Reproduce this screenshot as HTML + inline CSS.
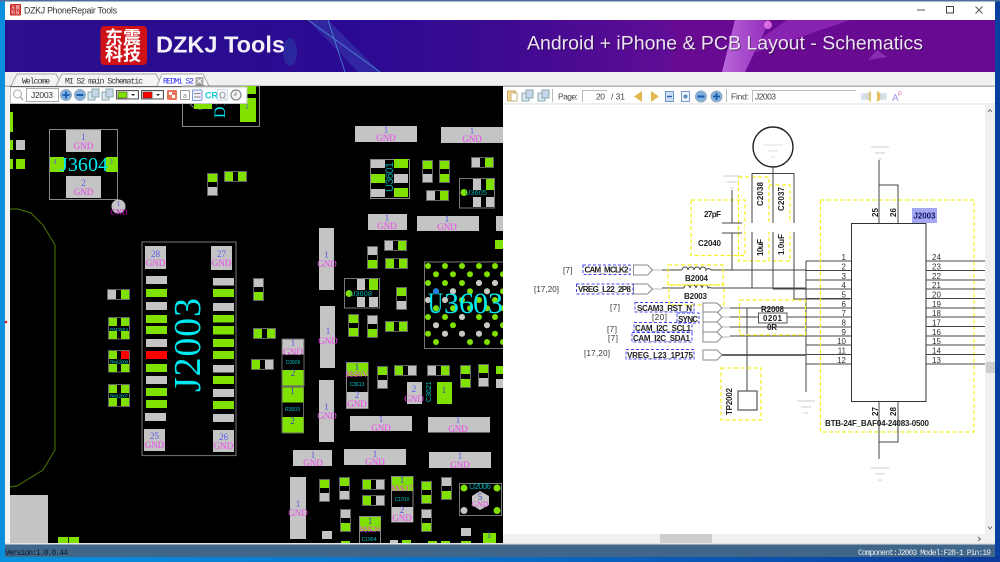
<!DOCTYPE html>
<html><head><meta charset="utf-8"><title>DZKJ PhoneRepair Tools</title>
<style>
html,body{margin:0;padding:0;background:#0a8fdc;width:1000px;height:562px;overflow:hidden}
svg{display:block;position:absolute;left:0;top:0;filter:blur(.35px)}
text{font-family:"Liberation Sans","Noto Sans CJK SC",sans-serif}
.s{font-family:"Liberation Serif",serif}
.n{font-family:"Liberation Serif",serif;font-size:9px;fill:#5a5af0;text-anchor:middle}
.g{font-family:"Liberation Serif",serif;font-size:9px;fill:#ee44ee;text-anchor:middle}
.c{font-family:"Liberation Serif",serif;fill:#00e8f0}
.t{font-family:"Liberation Sans",sans-serif;fill:#00a8a8;font-size:8px}
.m{font-family:"Liberation Mono",monospace;font-size:8px;fill:#333}
.k{font-size:8px;fill:#222;font-weight:bold}
.l{font-size:8px;fill:#333;text-anchor:end}
.r{font-size:8px;fill:#333}
.b{fill:none;stroke:#4444ee;stroke-width:1;stroke-dasharray:3 2}
.y{fill:none;stroke:#f5f020;stroke-width:1.2;stroke-dasharray:4 2.5}
.w{stroke:#444;stroke-width:1;fill:none}
.p{fill:#fff;stroke:#888;stroke-width:1}
.gl{stroke:#ccc;stroke-width:1;fill:none}
.tb{font-size:8.5px;fill:#444}
</style></head><body>
<svg width="1000" height="562" viewBox="0 0 1000 562" xmlns="http://www.w3.org/2000/svg">
<defs>
<linearGradient id="bn" x1="0" x2="1" y1="0" y2="0"><stop offset="0" stop-color="#2b0f8c"/><stop offset=".35" stop-color="#2a0a92"/><stop offset=".5" stop-color="#3c0a90"/><stop offset=".67" stop-color="#600c96"/><stop offset=".68" stop-color="#690a92"/><stop offset="1" stop-color="#690a92"/></linearGradient>
<linearGradient id="bt" x1="0" x2="1" y1="0" y2="0"><stop offset="0" stop-color="#0a92de"/><stop offset=".5" stop-color="#0a6cc4"/><stop offset="1" stop-color="#0a3a9c"/></linearGradient>
<linearGradient id="st" x1="0" x2="1" y1="0" y2="0"><stop offset="0" stop-color="#c878e8"/><stop offset="1" stop-color="#9a30c0"/></linearGradient>
<g id="hGW"><rect x=".5" y=".5" width="22" height="10" fill="#000" stroke="#666"/><rect x="1" y="1" width="8" height="9" fill="#80e000"/><rect x="14" y="1" width="8" height="9" fill="#c2c2c2"/></g>
<g id="hWG"><rect x=".5" y=".5" width="22" height="10" fill="#000" stroke="#666"/><rect x="1" y="1" width="8" height="9" fill="#c2c2c2"/><rect x="14" y="1" width="8" height="9" fill="#80e000"/></g>
<g id="hGG"><rect x=".5" y=".5" width="22" height="10" fill="#000" stroke="#666"/><rect x="1" y="1" width="8" height="9" fill="#80e000"/><rect x="14" y="1" width="8" height="9" fill="#80e000"/></g>
<g id="vGW"><rect x=".5" y=".5" width="10" height="22" fill="#000" stroke="#666"/><rect x="1" y="1" width="9" height="8" fill="#80e000"/><rect x="1" y="14" width="9" height="8" fill="#c2c2c2"/></g>
<g id="vWG"><rect x=".5" y=".5" width="10" height="22" fill="#000" stroke="#666"/><rect x="1" y="1" width="9" height="8" fill="#c2c2c2"/><rect x="1" y="14" width="9" height="8" fill="#80e000"/></g>
<g id="vGG"><rect x=".5" y=".5" width="10" height="22" fill="#000" stroke="#666"/><rect x="1" y="1" width="9" height="8" fill="#80e000"/><rect x="1" y="14" width="9" height="8" fill="#80e000"/></g>
<g id="rowA" fill="#80e000"><circle cx="428" cy="0" r="3"/><circle cx="445" cy="0" r="3"/><circle cx="462" cy="0" r="3"/><circle cx="479" cy="0" r="3"/><circle cx="495" cy="0" r="3"/></g>
<g id="rowB" fill="#80e000"><circle cx="436" cy="0" r="3"/><circle cx="453" cy="0" r="3"/><circle cx="470" cy="0" r="3"/><circle cx="487" cy="0" r="3"/><circle cx="503" cy="0" r="3"/></g>
<g id="gnd"><path class="gl" d="M-9 0H9M-5 6H5M-2 12H2"/></g>
<path id="port" d="M0 0H14L19 5L14 10H0Z"/>
<g id="pm"><circle r="5.500" fill="#7fb0de" stroke="#9ab"/><rect x="-3.500" y="-1" width="7" height="2" fill="#1a5ab0"/></g>
<g id="pp"><circle r="5.500" fill="#7fb0de" stroke="#9ab"/><path d="M-3.500 0H3.500M0 -3.500V3.500" stroke="#1a5ab0" stroke-width="1.800"/></g>
<g id="cp"><rect x="-5" y="-3" width="7" height="8" fill="#dde6f0" stroke="#8aa"/><rect x="-1" y="-6" width="7" height="8" fill="#c7d6e8" stroke="#8aa"/></g>
</defs>

<!-- frame -->
<rect width="1000" height="562" fill="#0a8fdc"/>
<rect x="995" width="5" height="562" fill="#0a3fa2"/>
<rect y="0" width="1000" height="1.500" fill="#4c6f96"/>
<rect y="556" width="1000" height="6" fill="url(#bt)"/>
<rect x="5" y="1.500" width="990" height="19" fill="#fff"/>

<!-- title -->
<rect x="10" y="4" width="11" height="11.500" rx="1" fill="#cc2222"/>
<text x="15.500" y="9" font-size="4.500" fill="#fff" text-anchor="middle">东震</text>
<text x="15.500" y="14" font-size="4.500" fill="#fff" text-anchor="middle">科技</text>
<text x="24" y="13.500" font-size="8.800" fill="#333" textLength="93">DZKJ PhoneRepair Tools</text>
<path d="M917 10H925" stroke="#555" stroke-width="1"/>
<rect x="946.500" y="6.500" width="7" height="6.500" fill="none" stroke="#444"/>
<path d="M975.500 6.500L982.500 13.500M982.500 6.500L975.500 13.500" stroke="#555" stroke-width="1"/>

<!-- banner -->
<rect x="5" y="20" width="990" height="52" fill="url(#bn)"/>
<polygon points="308,20 328,20 380,72 358,72" fill="#3f5ac0" opacity=".35"/>
<path d="M308 20L380 72M328 20L345 72" stroke="#5cc6ee" stroke-width="1" opacity=".55" fill="none"/>
<ellipse cx="290" cy="52" rx="7" ry="14" fill="#2f6ec0" opacity=".3"/>
<polygon points="787,20 850,20 757,52 745,50" fill="#9028b8" opacity=".8"/>
<polygon points="735,20 770,20 745,72 722,72" fill="url(#st)" opacity=".85"/>
<circle cx="768" cy="25" r="4" fill="#f080f0" opacity=".8"/>
<polygon points="868,60 887,57 877,50" fill="#8a2cb2"/>
<rect x="100.500" y="26" width="46.500" height="39" rx="4" fill="#cf1218"/>
<text x="105" y="44" font-size="18" font-weight="bold" fill="#fff" style="font-family:'Noto Sans CJK SC',sans-serif">东震</text>
<text x="105" y="60.500" font-size="18" font-weight="bold" fill="#fff" style="font-family:'Noto Sans CJK SC',sans-serif">科技</text>
<text x="156" y="52.500" font-size="23.500px" font-weight="bold" fill="#f4f0fa" textLength="129" lengthAdjust="spacingAndGlyphs">DZKJ Tools</text>
<text x="527" y="49.500" font-size="19.500px" fill="#000" opacity=".4" textLength="396" lengthAdjust="spacingAndGlyphs" transform="translate(1,1)">Android + iPhone &amp; PCB Layout - Schematics</text>
<text x="527" y="49.500" font-size="19.500px" fill="#ece2f2" textLength="396" lengthAdjust="spacingAndGlyphs">Android + iPhone &amp; PCB Layout - Schematics</text>

<!-- tab bar -->
<rect x="5" y="72" width="990" height="15" fill="#f0f0f0"/>
<rect x="5" y="85.500" width="990" height="1.500" fill="#b4b4b4"/>
<path d="M11 86L17 74H56L62 86" fill="#f4f4f4" stroke="#aaa"/>
<path d="M56 86L62 74H156L162 86" fill="#f4f4f4" stroke="#aaa"/>
<path d="M157 86L162 74H203L209 86" fill="#fff" stroke="#aaa"/>
<text x="22" y="83.500" class="m" textLength="28">Welcome</text>
<text x="65" y="83.500" class="m" textLength="78">MI S2 main Schematic</text>
<text x="163" y="83.500" class="m" style="fill:#3030f0" textLength="31">REDMi S2</text>
<rect x="195.500" y="77" width="8" height="8" fill="#aaa"/>
<path d="M197.500 79L201.500 83M201.500 79L197.500 83" stroke="#fff" stroke-width="1"/>

<!-- side strip -->
<rect x="5" y="87" width="5" height="457" fill="#f4f4f4"/>
<circle cx="6" cy="322" r="1.300" fill="#e02020"/>

<!-- BOARD -->
<rect x="10" y="86" width="493" height="457.500" fill="#000"/>

<!-- outline -->
<path d="M10 209H18L31 213L43 225L55 245V450L43 470L17 486L10 487" fill="none" stroke="#4c7800" stroke-width="1"/>
<rect x="10" y="495" width="38" height="48" fill="#c4c4c4"/>
<rect x="58" y="537" width="21" height="6" fill="#80e000"/><rect x="68" y="537" width="1" height="6" fill="#222"/>

<!-- left edge -->
<rect x="10" y="112" width="3" height="20" fill="#80e000"/>
<rect x="10" y="140" width="3" height="10" fill="#80e000"/><rect x="16" y="140" width="9" height="10" fill="#c2c2c2"/>
<rect x="10" y="159" width="3" height="10" fill="#80e000"/><rect x="16" y="159" width="9" height="10" fill="#80e000"/>

<!-- J3604 -->
<rect x="49.500" y="129.500" width="68" height="70" fill="none" stroke="#888"/>
<rect x="66" y="130" width="35" height="22" fill="#c4c4c4"/>
<rect x="66" y="176" width="35" height="22" fill="#c4c4c4"/>
<rect x="50" y="157" width="14" height="15" fill="#80e000"/>
<rect x="106" y="157" width="12" height="15" fill="#80e000"/>
<text x="83.500" y="140" class="n">1</text><text x="83.500" y="149" class="g">GND</text>
<text x="83.500" y="186" class="n">2</text><text x="83.500" y="195" class="g">GND</text>
<text x="55" y="164" class="n" style="font-size:7px">4</text><text x="111" y="164" class="n" style="font-size:7px">3</text>
<text x="60" y="171" class="c" font-size="20" textLength="48">J3604</text>
<circle cx="118.500" cy="206.500" r="7" fill="#c4c4c4"/>
<text x="118.500" y="206" class="n" style="font-size:7px">1</text>
<text x="119" y="215" class="g" style="fill:#c000c0;font-size:8px">GND</text>

<!-- D1 -->
<rect x="182.500" y="86" width="77" height="40.500" fill="none" stroke="#888"/>
<circle cx="200" cy="97" r="12" fill="none" stroke="#888"/>
<rect x="194" y="100" width="18" height="9" fill="#80e000"/>
<rect x="240" y="86" width="16" height="8" fill="#80e000"/>
<rect x="240" y="98" width="16" height="24" fill="#80e000"/>
<text x="247" y="109" class="n" style="font-size:8px">1</text>
<text transform="translate(225,118) rotate(-90)" class="c" font-size="16">D1</text>

<use href="#vGW" x="207" y="173"/><use href="#hGG" x="224" y="171"/>

<!-- J2003 -->
<rect x="142" y="242" width="94" height="213.500" fill="none" stroke="#666" stroke-width="1.200"/>
<g fill="#c4c4c4">
<rect x="145" y="246" width="21" height="23"/><rect x="211" y="246" width="21" height="24"/>
<rect x="144" y="429" width="21" height="22"/><rect x="213" y="430" width="21" height="22"/>
<rect x="146" y="276" width="21" height="8"/><rect x="146" y="302" width="21" height="8"/><rect x="146" y="339" width="21" height="8"/><rect x="146" y="376" width="21" height="8"/><rect x="145" y="413" width="21" height="8"/>
<rect x="213" y="278" width="21" height="7.500"/><rect x="213" y="303" width="21" height="8"/><rect x="213" y="365" width="21" height="7.500"/><rect x="213" y="389" width="21" height="8"/><rect x="213" y="414" width="21" height="8"/>
</g>
<g fill="#80e000">
<rect x="146" y="289" width="21" height="8"/><rect x="146" y="315" width="21" height="8"/><rect x="146" y="326" width="21" height="8"/><rect x="146" y="364" width="21" height="8"/><rect x="146" y="388" width="21" height="8"/><rect x="146" y="400" width="21" height="8"/>
<rect x="213" y="289" width="21" height="8"/><rect x="213" y="315" width="21" height="7.500"/><rect x="213" y="326" width="21" height="8.500"/><rect x="213" y="339" width="21" height="8"/><rect x="213" y="351" width="21" height="8"/><rect x="213" y="376" width="21" height="8"/><rect x="213" y="401" width="21" height="8"/>
</g>
<rect x="146" y="351" width="21" height="8" fill="#ff0000"/>
<text x="155.500" y="257" class="n">28</text><text x="155.500" y="266" class="g">GND</text>
<text x="221.500" y="257" class="n">27</text><text x="221.500" y="266" class="g">GND</text>
<text x="154.500" y="439" class="n">25</text><text x="154.500" y="448" class="g">GND</text>
<text x="223.500" y="440" class="n">26</text><text x="223.500" y="449" class="g">GND</text>
<text transform="translate(200,392) rotate(-90)" class="c" font-size="38" textLength="94">J2003</text>

<!-- left comps -->
<use href="#hWG" x="107" y="289"/>
<rect x="108.500" y="317.500" width="21" height="21.500" fill="#000" stroke="#666"/><rect x="109" y="318" width="8" height="8" fill="#80e000"/><rect x="121" y="318" width="8" height="8" fill="#80e000"/><rect x="109" y="331" width="8" height="8" fill="#80e000"/><rect x="121" y="331" width="8" height="8" fill="#80e000"/><text x="119" y="331" class="t" text-anchor="middle" style="font-size:4.500px;fill:#00d8d8" textLength="18">RM3604</text>
<rect x="108.500" y="350.500" width="21" height="21.500" fill="#000" stroke="#666"/><rect x="109" y="351" width="8" height="8" fill="#80e000"/><rect x="121" y="351" width="8" height="8" fill="#ff0000"/><rect x="109" y="364" width="8" height="8" fill="#80e000"/><rect x="121" y="364" width="8" height="8" fill="#80e000"/><text x="119" y="363.500" class="t" text-anchor="middle" style="font-size:4.500px;fill:#00d8d8" textLength="18">RM12008</text>
<rect x="108.500" y="384.500" width="21" height="22" fill="#000" stroke="#666"/><rect x="109" y="385" width="8" height="8" fill="#80e000"/><rect x="121" y="385" width="8" height="8" fill="#80e000"/><rect x="109" y="398" width="8" height="8" fill="#80e000"/><rect x="121" y="398" width="8" height="8" fill="#80e000"/><text x="119" y="397.500" class="t" text-anchor="middle" style="font-size:4.500px;fill:#00d8d8" textLength="18">RM12007</text>

<!-- GND pads horizontal -->
<g fill="#c4c4c4">
<rect x="355" y="126" width="62" height="16"/><rect x="441" y="127" width="62" height="16"/>
<rect x="368" y="214" width="39" height="16"/><rect x="417" y="216" width="62" height="15"/><rect x="496" y="216" width="7" height="15"/>
<rect x="319" y="228" width="15" height="62"/><rect x="320" y="306" width="15" height="62"/><rect x="319" y="380" width="15" height="62"/>
<rect x="350" y="416" width="62" height="15"/><rect x="428" y="417" width="62" height="15.500"/>
<rect x="293" y="450" width="39" height="16"/><rect x="344" y="449" width="62" height="16"/><rect x="429" y="452" width="62" height="16"/>
<rect x="290" y="477" width="16" height="62"/>
</g>
<rect x="495" y="240" width="8" height="9" fill="#80e000"/>
<text x="386" y="133" class="n">1</text><text x="386" y="141" class="g">GND</text>
<text x="472" y="134" class="n">1</text><text x="472" y="142" class="g">GND</text>
<text x="387" y="221" class="n">1</text><text x="387" y="229" class="g">GND</text>
<text x="447" y="222" class="n">1</text><text x="447" y="230" class="g">GND</text>
<text x="326.500" y="258" class="n">1</text><text x="327" y="267" class="g">GND</text>
<text x="328" y="334" class="n">1</text><text x="328" y="344" class="g">GND</text>
<text x="326.500" y="410" class="n">1</text><text x="327" y="419" class="g">GND</text>
<text x="381" y="422" class="n">1</text><text x="381" y="431" class="g">GND</text>
<text x="458" y="423" class="n">1</text><text x="458" y="432" class="g">GND</text>
<text x="313" y="458" class="n">1</text><text x="313" y="466" class="g">GND</text>
<text x="375" y="457" class="n">1</text><text x="375" y="465" class="g">GND</text>
<text x="460" y="459" class="n">1</text><text x="460" y="468" class="g">GND</text>
<text x="298" y="507" class="n">1</text><text x="298" y="516" class="g">GND</text>

<!-- U3601 -->
<rect x="370.500" y="159.500" width="39" height="39" fill="#000" stroke="#888"/>
<rect x="371" y="160" width="14" height="8" fill="#c4c4c4"/><rect x="394" y="159" width="14" height="9" fill="#80e000"/>
<rect x="371" y="174" width="14" height="9" fill="#80e000"/><rect x="394" y="174" width="14" height="9" fill="#c4c4c4"/>
<rect x="371" y="189" width="14" height="8" fill="#c4c4c4"/><rect x="394" y="188" width="14" height="9" fill="#80e000"/>
<text transform="translate(393,192) rotate(-90)" class="t" style="font-size:11px" textLength="30">U3601</text>

<use href="#vGW" x="422" y="160"/><use href="#vGG" x="439" y="160"/><use href="#hWG" x="471" y="157"/><use href="#hWG" x="426" y="190"/>

<!-- U3605 -->
<rect x="459.500" y="178.500" width="35" height="29.500" fill="#000" stroke="#777"/>
<rect x="473" y="179" width="8" height="11" fill="#c4c4c4"/><rect x="486" y="179" width="8" height="11" fill="#80e000"/>
<rect x="473" y="197" width="8" height="10" fill="#c4c4c4"/><rect x="486" y="197" width="8" height="10" fill="#c4c4c4"/>
<circle cx="464" cy="192.500" r="3.500" fill="#80e000"/>
<text x="465" y="195" class="t" style="font-size:7.500px" textLength="22">U3605</text>

<use href="#vWG" x="367" y="246"/><use href="#hWG" x="384" y="240"/><use href="#hGG" x="385" y="258"/><use href="#vWG" x="253" y="278"/>

<!-- U3608 -->
<rect x="344.500" y="278.500" width="35" height="29.500" fill="#000" stroke="#777"/>
<rect x="357" y="279" width="8" height="11" fill="#c4c4c4"/><rect x="369" y="279" width="9" height="11" fill="#80e000"/>
<rect x="357" y="297" width="8" height="10" fill="#c4c4c4"/><rect x="369" y="297" width="9" height="10" fill="#c4c4c4"/>
<circle cx="349" cy="293.500" r="3.500" fill="#80e000"/>
<text x="350" y="296" class="t" style="font-size:7.500px" textLength="22">U3608</text>
<use href="#vGW" x="396" y="287"/><use href="#vGG" x="348" y="314"/><use href="#vWG" x="367" y="315"/><use href="#hGG" x="385" y="321"/><use href="#hGG" x="253" y="328"/>

<!-- U3603 BGA -->
<rect x="424.500" y="262" width="79" height="86.500" fill="none" stroke="#777"/>
<use href="#rowA" y="266"/><use href="#rowB" y="274.300"/><use href="#rowA" y="283"/><use href="#rowB" y="291.300"/><use href="#rowA" y="300"/><use href="#rowB" y="308.300"/><use href="#rowA" y="317"/><use href="#rowB" y="325.300"/><use href="#rowA" y="333.700"/><use href="#rowB" y="342"/>
<g fill="#c8c8c8"><circle cx="479" cy="283" r="3"/><circle cx="495" cy="283" r="3"/><circle cx="453" cy="291.300" r="3"/><circle cx="487" cy="291.300" r="3"/><circle cx="428" cy="300" r="3"/><circle cx="445" cy="300" r="3"/><circle cx="462" cy="317" r="3"/><circle cx="436" cy="325.300" r="3"/><circle cx="487" cy="325.300" r="3"/><circle cx="445" cy="333.700" r="3"/><circle cx="462" cy="333.700" r="3"/><circle cx="479" cy="333.700" r="3"/></g>
<circle cx="470" cy="325.300" r="3.300" fill="#000"/><circle cx="453" cy="342" r="3.300" fill="#000"/>
<circle cx="436" cy="291.300" r="3" fill="#2080f0"/>
<text x="428" y="313" class="c" font-size="30" textLength="15" lengthAdjust="spacingAndGlyphs">U</text>
<text x="444 459 473 488" y="313" class="c" font-size="30">3603</text>

<!-- stacks -->
<rect x="282" y="339" width="22" height="47" fill="#000" stroke="#666"/>
<rect x="282.500" y="339.500" width="21" height="15" fill="#c4c4c4"/><rect x="282.500" y="370" width="21" height="15.500" fill="#80e000"/>
<text x="293" y="346" class="n">1</text><text x="293" y="355" class="g">GND</text><text x="293" y="376" class="n" style="fill:#4040c0">2</text>
<text x="293" y="364" class="t" text-anchor="middle" style="font-size:5px;fill:#00c8c8">C0606</text>
<rect x="282" y="387" width="21.500" height="46" fill="#000" stroke="#666"/>
<rect x="282.500" y="387.500" width="21" height="15" fill="#80e000"/><rect x="282.500" y="417" width="21" height="15.500" fill="#80e000"/>
<text x="292.500" y="394" class="n" style="fill:#4040c0">1</text><text x="292.500" y="424" class="n" style="fill:#4040c0">2</text>
<text x="292.500" y="411" class="t" text-anchor="middle" style="font-size:5px;fill:#00c8c8">R3003</text>
<use href="#hGW" x="251" y="359"/>

<rect x="346.500" y="362.500" width="21.500" height="46" fill="#000" stroke="#888"/>
<rect x="347" y="363" width="21" height="13" fill="#80e000"/><rect x="347" y="392" width="21" height="16" fill="#c4c4c4"/>
<text x="357" y="370" class="n" style="fill:#4040c0">1</text><text x="357" y="377" class="g" style="font-size:8.500px">$$$6V</text>
<text x="357" y="386" class="t" text-anchor="middle" style="font-size:5px;fill:#00c8c8">C3613</text>
<text x="357" y="398" class="n">2</text><text x="357" y="407" class="g">GND</text>

<use href="#vGW" x="377" y="366"/><use href="#hGW" x="394" y="365"/><use href="#hWG" x="427" y="365"/><use href="#vGG" x="460" y="365"/><use href="#vGW" x="478" y="364"/>
<rect x="496" y="366" width="7" height="22" fill="#000"/><rect x="496" y="366" width="7" height="8" fill="#80e000"/><rect x="496" y="379" width="7" height="9" fill="#c4c4c4"/>

<!-- C3621 -->
<rect x="407" y="382" width="45" height="22" fill="#000"/>
<rect x="407" y="382" width="15" height="22" fill="#c4c4c4"/><rect x="437" y="382" width="15" height="22" fill="#80e000"/>
<text x="414" y="392" class="n">2</text><text x="414" y="402" class="g">GND</text><text x="444" y="393" class="n" style="fill:#4040c0">1</text>
<text transform="translate(431,402) rotate(-90)" class="t" style="font-size:7px;fill:#00c8c8">C3621</text>

<use href="#vGW" x="319" y="479"/><use href="#vGW" x="339" y="477"/><use href="#hGW" x="362" y="479"/><use href="#hGW" x="362" y="495"/>
<rect x="391.500" y="476.500" width="21.500" height="45.500" fill="#000" stroke="#888"/>
<rect x="392" y="477" width="21" height="14" fill="#80e000"/><rect x="392" y="507" width="21" height="15" fill="#c4c4c4"/>
<text x="402" y="483" class="n" style="fill:#4040c0">1</text><text x="402" y="491" class="g" style="font-size:8.500px">$$$37</text>
<text x="402" y="501" class="t" text-anchor="middle" style="font-size:5px;fill:#00c8c8">C1910</text>
<text x="402" y="513" class="n">2</text><text x="402" y="521" class="g">GND</text>
<use href="#vGG" x="421" y="481"/><use href="#vWG" x="441" y="477"/>

<!-- U2006 -->
<rect x="459.500" y="483.500" width="42" height="32" fill="#000" stroke="#777"/>
<circle cx="464" cy="488" r="3.500" fill="#80e000"/><circle cx="497" cy="488" r="3.500" fill="#80e000"/>
<circle cx="464" cy="510.500" r="3.500" fill="#c4c4c4"/><circle cx="497" cy="510.500" r="3.500" fill="#80e000"/>
<polygon points="480,491 489,496 489,505 480,510 472,505 472,496" fill="#c4c4c4"/>
<text x="469" y="489" class="t" style="font-size:8.500px" textLength="22">U2006</text>
<text x="480" y="500" class="n" style="fill:#4040c0">5</text><text x="480" y="507" class="g" style="font-size:8px">GND</text>

<use href="#vWG" x="340" y="509"/><use href="#vWG" x="421" y="509"/>
<rect x="359.500" y="516.500" width="21" height="27" fill="#000" stroke="#888"/>
<rect x="360" y="517" width="20.500" height="14" fill="#80e000"/>
<text x="370" y="524" class="n" style="fill:#4040c0">1</text><text x="370" y="532" class="g" style="font-size:8.500px">$$$26</text>
<text x="369" y="541" class="t" text-anchor="middle" style="font-size:5px;fill:#00c8c8">C1904</text>
<rect x="322" y="531" width="10" height="8" fill="#c4c4c4"/>
<rect x="461" y="528" width="10" height="8" fill="#c4c4c4"/><rect x="461" y="541" width="10" height="2" fill="#80e000"/>
<rect x="483" y="533" width="13" height="10" fill="#80e000"/><text x="489" y="538" class="n" style="fill:#4040c0">1</text>
<rect x="341" y="541" width="9" height="2" fill="#80e000"/><rect x="390" y="540" width="8" height="3" fill="#c4c4c4"/><rect x="402" y="540" width="9" height="3" fill="#80e000"/><rect x="428" y="541" width="9" height="2" fill="#80e000"/><rect x="441" y="541" width="9" height="2" fill="#80e000"/>

<!-- left toolbar -->
<rect x="10.500" y="87" width="236.500" height="16.500" fill="#fff" stroke="#c4c4c4"/>
<circle cx="17.500" cy="94" r="4" fill="none" stroke="#aaa" stroke-width="1"/><path d="M20.500 97L23 100" stroke="#999" stroke-width="1.200"/>
<rect x="26.500" y="88.500" width="32" height="13" fill="#fff" stroke="#aaa"/>
<text x="31" y="98" font-size="8.500" fill="#333" textLength="22">J2003</text>
<use href="#pp" x="66" y="95"/><use href="#pm" x="80" y="95"/>
<use href="#cp" x="93" y="95"/><use href="#cp" x="107" y="95"/>
<rect x="116.500" y="90.500" width="22" height="8.500" fill="#e8e8e8" stroke="#555"/><rect x="118" y="92" width="9" height="6" fill="#80e000" stroke="#333" stroke-width=".5"/><rect x="129" y="92" width="8" height="6" fill="#fff"/><path d="M131 94H135L133 96Z" fill="#222"/>
<rect x="141.500" y="90.500" width="22" height="8.500" fill="#e8e8e8" stroke="#555"/><rect x="143" y="92" width="9" height="6" fill="#ff0000" stroke="#333" stroke-width=".5"/><rect x="154" y="92" width="8" height="6" fill="#fff"/><path d="M156 94H160L158 96Z" fill="#222"/>
<rect x="167" y="90" width="10" height="10" rx="1" fill="#e8755a"/><rect x="169" y="92" width="3" height="3" fill="#fff"/><rect x="172" y="95" width="3" height="3" fill="#fff"/>
<rect x="180.500" y="90.500" width="9" height="9" rx="1" fill="#fff" stroke="#999"/><text x="185" y="98" font-size="7" fill="#888" text-anchor="middle">a</text>
<rect x="192.500" y="90" width="9.500" height="10.500" rx="1" fill="#eef" stroke="#7a9ad0"/><path d="M194 93.500H200.500M194 97H200.500" stroke="#888"/>
<text x="205" y="98.500" font-size="9" font-weight="bold" fill="#10c8d8">CR</text>
<rect x="217.500" y="89.500" width="10" height="11" fill="#f4f8fc" stroke="#d0dcea"/><text x="222.500" y="98.500" font-size="9.500" fill="#888" text-anchor="middle">Ω</text>
<circle cx="236" cy="95" r="5" fill="#f4f4f4" stroke="#888" stroke-width="1.200"/><path d="M236 92V95H233.500" stroke="#888" fill="none"/>

<!-- RIGHT PANEL -->
<rect x="503" y="87" width="492" height="457" fill="#fff"/>
<rect x="503" y="103.500" width="492" height="1" fill="#dcdcdc"/>
<!-- right toolbar -->
<rect x="507.500" y="91" width="8" height="10" fill="#f4d78e" stroke="#c8a860"/><rect x="511" y="93" width="6" height="8" fill="#fff" stroke="#c8b080"/>
<use href="#cp" x="527" y="96"/><use href="#cp" x="543" y="96"/>
<path d="M552.500 89V102M726.500 89V102" stroke="#bbb"/>
<text x="558" y="99.500" class="tb" textLength="20">Page:</text>
<path d="M582.500 102V90.500H607" fill="none" stroke="#bbb"/>
<text x="596" y="99.500" class="tb" textLength="9">20</text>
<text x="611" y="99.500" class="tb" textLength="14">/ 31</text>
<polygon points="642,91 642,102 634,96.500" fill="#e4b850"/><polygon points="651,91 651,102 659,96.500" fill="#e4b850"/>
<rect x="665.500" y="91.500" width="8" height="10" fill="#cfe0f2" stroke="#6a98cc"/><path d="M667 96.500H672" stroke="#2a60b0" stroke-width="1.500"/>
<rect x="681.500" y="91.500" width="8" height="10" fill="#eef4fa" stroke="#7a9ccc"/><circle cx="685.500" cy="96.500" r="2" fill="#5a8ac0"/>
<use href="#pm" x="701" y="96.500"/><use href="#pp" x="716.500" y="96.500"/>
<text x="731" y="99.500" class="tb" textLength="18">Find:</text>
<path d="M752.500 102V90.500H856" fill="none" stroke="#bbb"/>
<text x="755" y="99.500" class="tb" textLength="21">J2003</text>
<polygon points="871,91 871,102 862,96.500" fill="#e4c878"/><rect x="861" y="93" width="8" height="7" fill="#cfdff0" opacity=".8"/>
<polygon points="877,91 877,102 886,96.500" fill="#e4c060"/><rect x="880" y="93" width="7" height="7" fill="#cfdff0" opacity=".8"/>
<text x="892" y="101" font-size="10" fill="#b090e8">A</text><text x="898" y="96" font-size="6" fill="#e060a0">P</text>

<!-- scrollbars -->
<rect x="985" y="105" width="10" height="439" fill="#f0f0f0"/>
<rect x="503" y="534" width="492" height="10" fill="#f0f0f0"/>
<rect x="986" y="362" width="9" height="11" fill="#cdcdcd"/>
<rect x="660" y="534" width="52" height="10" fill="#cdcdcd"/>
<path d="M988 112L990 109.500L992 112M988 526.500L990 529L992 526.500" stroke="#666" fill="none"/>
<path d="M978 537L980.500 539L978 541" stroke="#666" fill="none"/>

<!-- schematic -->
<circle cx="773" cy="147" r="20" fill="none" stroke="#222" stroke-width="1.400"/>
<g stroke="#ddd" fill="none"><path d="M763 145H783M768 151H778M771 157H775"/></g>
<rect x="691" y="200" width="54" height="55.500" class="y"/>
<rect x="738.500" y="177" width="30.500" height="84" class="y"/>
<path d="M769 185H790V261H769" class="y"/>
<path d="M752 288V173.500H794V299H850M773 167V289M806 261V392" class="w"/>
<path d="M732 190V223M722 223H742M722 233H742M732 233V270" class="w"/>
<rect x="745" y="223" width="52" height="9" fill="#fff"/>
<use href="#gnd" x="732" y="176"/>
<text transform="translate(763,206) rotate(-90)" class="k" textLength="24">C2038</text>
<text transform="translate(784,211) rotate(-90)" class="k" textLength="24">C2037</text>
<text transform="translate(763,256) rotate(-90)" class="k" textLength="17">10uF</text>
<text transform="translate(784,255) rotate(-90)" class="k" textLength="21">1.0uF</text>
<text x="704" y="217" class="k" textLength="17">27pF</text>
<text x="698" y="246" class="k" textLength="23">C2040</text>

<!-- ports & lines -->
<path d="M662 270H682M711 270H806M662 288H684M711 288H806M806 261H851M806 270.500H851M806 280H851M773 289H851M806 298.500H851M730 308H851M730 317H758M787 317H851M730 327H851M730 336H851M806 345H851M806 354.500H851M806 364H851" class="w"/>
<path d="M722 355H806" stroke="#666" stroke-width="2"/>
<path d="M652 270H662M652 289H662M722 308H730M722 317H730M722 327H730M722 337H730" stroke="#bbb"/>
<path d="M682 270a3 3 0 0 1 6 0a3 3 0 0 1 6 0a3 3 0 0 1 6 0a3 3 0 0 1 6 0a3 3 0 0 1 5 0M684 288a3 3 0 0 1 6 0a3 3 0 0 1 6 0a3 3 0 0 1 6 0a3 3 0 0 1 6 0a3 3 0 0 1 3 0" class="w"/>
<rect x="668" y="265" width="55" height="20" class="y"/><rect x="669" y="285" width="55" height="20" class="y"/>
<text x="685" y="281" class="k" textLength="23">B2004</text><text x="684" y="299" class="k" textLength="23">B2003</text>
<use href="#port" x="633.500" y="265" class="p"/><use href="#port" x="633.500" y="284" class="p"/>
<use href="#port" x="703" y="303" class="p"/><use href="#port" x="703" y="312" class="p"/><use href="#port" x="703" y="322" class="p"/><use href="#port" x="703" y="332" class="p"/><use href="#port" x="703" y="350" class="p"/>

<rect x="583" y="265" width="47" height="9.500" class="b"/><rect x="576.500" y="284" width="56.500" height="10" class="b"/>
<rect x="635" y="302.500" width="59" height="9.500" class="b"/><rect x="677" y="313" width="22" height="10" class="b"/>
<rect x="634" y="322.500" width="58" height="9.500" class="b"/><rect x="632" y="332.500" width="60" height="9.500" class="b"/><rect x="626" y="349.500" width="68" height="9.500" class="b"/>
<text x="563" y="273" class="r" textLength="9.500">[7]</text>
<text x="534" y="292" class="r" textLength="25">[17,20]</text>
<text x="610" y="310" class="r" textLength="10">[7]</text>
<text x="652" y="320" class="r" textLength="15">[20]</text>
<text x="607" y="332" class="r" textLength="10">[7]</text>
<text x="608" y="341" class="r" textLength="10">[7]</text>
<text x="584" y="356" class="r" textLength="26">[17,20]</text>
<text x="584.500" y="272.500" class="k" textLength="44">CAM_MCLK2</text>
<text x="578" y="292" class="k" textLength="53">VREG_L22_2P8</text>
<text x="637" y="311" class="k" textLength="55">SCAM3_RST_N</text>
<text x="678" y="322" class="k" textLength="20">SYNC</text>
<text x="635" y="331" class="k" textLength="56">CAM_I2C_SCL1</text>
<text x="633" y="341" class="k" textLength="57">CAM_I2C_SDA1</text>
<text x="627" y="358" class="k" textLength="66">VREG_L23_1P175</text>

<path d="M747 308V391" stroke="#444" stroke-width="1"/>
<rect x="721" y="368" width="40" height="52" class="y"/>
<rect x="738" y="391" width="19" height="19" fill="none" stroke="#555" stroke-width="1.200"/>
<text transform="translate(732,415) rotate(-90)" class="k" textLength="27">TP2002</text>
<rect x="739.500" y="300" width="66" height="35" class="y"/>
<rect x="758.500" y="313" width="28.500" height="10" fill="#fff" stroke="#555"/>
<text x="761" y="312" class="k" textLength="23">R2008</text>
<text x="763" y="321" class="k" textLength="19">0201</text>
<text x="767" y="330" class="k" textLength="10">0R</text>

<use href="#gnd" x="806" y="401"/>

<!-- chip -->
<rect x="820.500" y="200" width="153.500" height="232" class="y"/>
<rect x="851.500" y="223.500" width="74.500" height="178" fill="#fff" stroke="#333" stroke-width="1"/>
<path d="M879 160V223M879 185H898V223M879 401V459M898 401V442H879" class="w"/>
<use href="#gnd" x="880" y="147"/><use href="#gnd" x="880" y="468"/>
<path d="M926 261H985M926 270.500H985M926 280H985M926 289H985M926 298.500H985M926 308H985M926 317H985M926 326.500H985M926 336H985M926 345H985M926 354.500H985M926 364H985" class="w"/>
<rect x="912" y="208" width="25" height="15" fill="#a4a8f0"/>
<text x="913.500" y="218.500" class="k" style="fill:#14146a" textLength="22">J2003</text>
<text transform="translate(878,217) rotate(-90)" class="k">25</text>
<text transform="translate(896,217) rotate(-90)" class="k">26</text>
<text transform="translate(878,416) rotate(-90)" class="k">27</text>
<text transform="translate(896,416) rotate(-90)" class="k">28</text>
<text x="825" y="426" class="k" textLength="104">BTB-24F_BAF04-24083-0500</text>
<text x="846" y="260" class="l">1</text><text x="846" y="269.500" class="l">2</text><text x="846" y="279" class="l">3</text><text x="846" y="288" class="l">4</text><text x="846" y="297.500" class="l">5</text><text x="846" y="307" class="l">6</text><text x="846" y="316" class="l">7</text><text x="846" y="325.500" class="l">8</text><text x="846" y="335" class="l">9</text><text x="846" y="344" class="l">10</text><text x="846" y="353.500" class="l">11</text><text x="846" y="363" class="l">12</text>
<text x="932" y="260" class="r">24</text><text x="932" y="269.500" class="r">23</text><text x="932" y="279" class="r">22</text><text x="932" y="288" class="r">21</text><text x="932" y="297.500" class="r">20</text><text x="932" y="307" class="r">19</text><text x="932" y="316" class="r">18</text><text x="932" y="325.500" class="r">17</text><text x="932" y="335" class="r">16</text><text x="932" y="344" class="r">15</text><text x="932" y="353.500" class="r">14</text><text x="932" y="363" class="r">13</text>

<!-- status -->
<rect x="5" y="543" width="990" height="1.500" fill="#dfe4ea"/>
<rect x="5" y="544.500" width="990" height="12.500" fill="#40668a"/>
<text x="5" y="555" class="m" style="fill:#0c1a2a" textLength="63">Version:1.0.0.44</text>
<text x="858" y="555" class="m" style="fill:#e4eaf0" textLength="133">Component:J2003 Model:F28-1 Pin:19</text>
</svg>
</body></html>
